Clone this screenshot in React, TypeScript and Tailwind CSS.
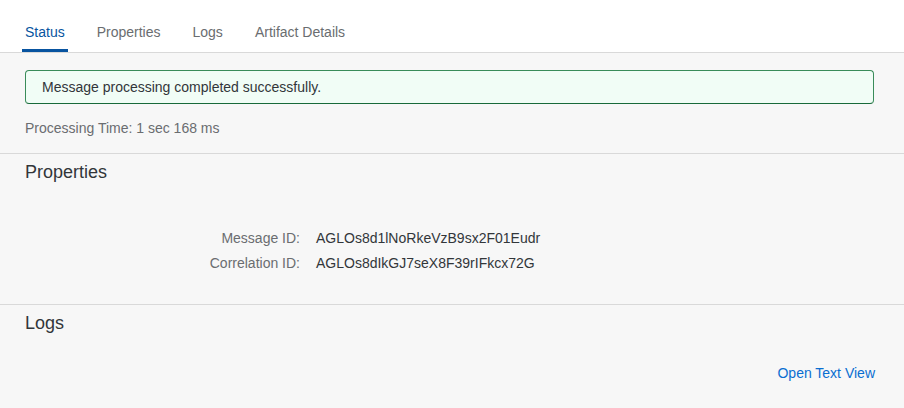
const tabs = ['Status', 'Properties', 'Logs', 'Artifact Details'];

function App() {
  return (
    <div className="w-[904px] h-[408px] overflow-hidden bg-[#f7f7f7] text-[#32363a]" style={{ fontFamily: '"Liberation Sans", Arial, sans-serif' }}>
      {/* tab header */}
      <div className="bg-white h-[53px] border-b border-[#d9d9d9] flex items-end px-[22px] gap-[26px]">
        {tabs.map((t, i) => (
          <div
            key={t}
            className={
              'h-[30px] px-[3px] text-[14px] leading-[20px] ' +
              (i === 0 ? 'text-[#0854a0] border-b-[3px] border-[#0854a0]' : 'text-[#6a6d70]')
            }
          >
            {t}
          </div>
        ))}
      </div>

      {/* status */}
      <div className="pl-[25px] pr-[30px] pt-[17px] pb-[15px] border-b border-[#d9d9d9]">
        <div className="h-[34px] flex items-center px-[16px] rounded-[4px] bg-[#f1fdf6] border border-[#3a8c5a] border-b-[#186a3a] text-[14px] text-[#32363a]">
          Message processing completed successfully.
        </div>
        <div className="mt-[14px] text-[14px] text-[#6a6d70] leading-[20px]">Processing Time: 1 sec 168 ms</div>
      </div>

      {/* properties */}
      <div className="px-[25px] pt-[6px] h-[151px] border-b border-[#d9d9d9]">
        <div className="text-[18px] leading-[24px]">Properties</div>
        <div className="mt-[44px] grid grid-cols-[275px_1fr] gap-x-[16px] gap-y-[5px] text-[14px] leading-[20px]">
          <div className="text-right text-[#6a6d70]">Message ID:</div>
          <div>AGLOs8d1lNoRkeVzB9sx2F01Eudr</div>
          <div className="text-right text-[#6a6d70]">Correlation ID:</div>
          <div>AGLOs8dIkGJ7seX8F39rIFkcx72G</div>
        </div>
      </div>

      {/* logs */}
      <div className="pl-[25px] pr-[29px] pt-[6px]">
        <div className="text-[18px] leading-[24px]">Logs</div>
        <div className="mt-[28px] flex justify-end">
          <a className="text-[14px] text-[#0a6ed1] leading-[20px] cursor-pointer">Open Text View</a>
        </div>
      </div>
    </div>
  );
}

export default App;
